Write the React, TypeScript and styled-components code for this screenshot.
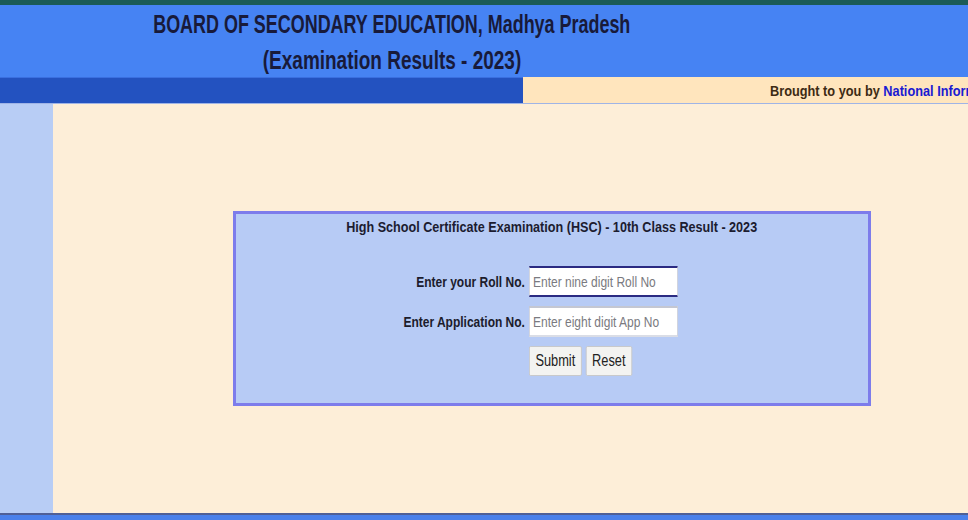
import React from 'react'
import styled, { createGlobalStyle } from 'styled-components'

const GlobalStyle = createGlobalStyle`
  html, body {
    margin: 0;
    padding: 0;
    height: 100%;
    overflow: hidden;
  }
  body {
    font-family: "Liberation Sans", Arial, sans-serif;
  }
`

// the original page uses a narrow face; squeeze Liberation Sans to match
const Narrow = styled.span<{ $origin?: string; $k?: number }>`
  display: inline-block;
  white-space: nowrap;
  transform: scaleX(${(p) => p.$k ?? 0.8});
  transform-origin: ${(p) => p.$origin ?? 'center'};
`

const Page = styled.div`
  width: 968px;
  height: 520px;
  display: flex;
  flex-direction: column;
  background: #fdeed8;
`

const TopStrip = styled.div`
  height: 5px;
  background: #1b5b56;
`

const Header = styled.header`
  height: 72px;
  background: #4683f3;
  display: grid;
  grid-template-columns: 784px 1fr;
`

const Title = styled.h1`
  margin: 0;
  padding-top: 1px;
  display: flex;
  flex-direction: column;
  align-items: center;
  font-size: 26px;
  line-height: 36px;
  font-weight: 700;
  color: #181a3a;
`

const SubBar = styled.div`
  height: 26px;
  display: grid;
  grid-template-columns: 523px 1fr;
  border-bottom: 1px solid #9fb4e6;
`

const SubBarLeft = styled.div`
  background: #2352c0;
  border-top: 1px solid #3a6fe0;
`

const SubBarRight = styled.div`
  background: #ffe5bd;
  overflow: hidden;
  padding-left: 247px;
  padding-top: 1px;
  font-size: 15px;
  line-height: 26px;
  font-weight: 700;
  color: #3d2b14;
`

const Link = styled.span`
  color: #1a1ad2;
`

const Body = styled.main`
  flex: 1;
  display: grid;
  grid-template-columns: 53px 1fr;
`

const SideColumn = styled.aside`
  background: #b8cdf5;
`

const Content = styled.section`
  background: #fdeed8;
  padding: 107px 0 0 180px;
`

const FormBox = styled.div`
  width: 632px;
  height: 189px;
  background: #b7cbf5;
  border: 3px solid #7d7ceb;
  display: flex;
  flex-direction: column;
`

const BoxTitle = styled.div`
  padding-top: 3px;
  text-align: center;
  font-size: 15px;
  line-height: 20px;
  font-weight: 700;
  color: #1c1c30;
`

const FormGrid = styled.div`
  margin-top: 29px;
  display: grid;
  grid-template-columns: 289px auto;
  column-gap: 4px;
  row-gap: 9px;
  align-items: center;
`

const Label = styled.label`
  text-align: right;
  font-size: 15px;
  font-weight: 700;
  color: #1c1c2c;
`

const Input = styled.input<{ $focused?: boolean }>`
  width: 186px;
  height: 31px;
  box-sizing: border-box;
  padding: 0 4px;
  background: #fff;
  font-family: inherit;
  font-size: 15px;
  color: #222;
  border: 1px solid #c9ccd6;
  border-top: 2px solid ${(p) => (p.$focused ? '#2b2b82' : '#c4c7d2')};
  border-bottom: 2px solid ${(p) => (p.$focused ? '#2b2b82' : '#dadde6')};
  outline: none;
  transform: scaleX(0.8);
  transform-origin: left;
  &::placeholder {
    color: #7a7a80;
  }
`

const Buttons = styled.div`
  grid-column: 2;
  display: flex;
  gap: 5px;
  transform: scaleX(0.8);
  transform-origin: left;
`

const Button = styled.button`
  height: 30px;
  padding: 0 7px;
  background: #f3f3f1;
  border: 1px solid #c6c6c6;
  border-radius: 2px;
  font-family: inherit;
  font-size: 16px;
  color: #222;
`

const Footer = styled.footer`
  height: 7px;
  background: #4a80ea;
  border-top: 2px solid #4f5f96;
  box-sizing: border-box;
`

export default function App() {
  return (
    <>
      <GlobalStyle />
      <Page>
        <TopStrip />
        <Header>
          <Title>
            <Narrow $k={0.69}>BOARD OF SECONDARY EDUCATION, Madhya Pradesh</Narrow>
            <Narrow $k={0.73}>(Examination Results - 2023)</Narrow>
          </Title>
          <div />
        </Header>
        <SubBar>
          <SubBarLeft />
          <SubBarRight>
            <Narrow $origin="left" $k={0.85}>
              Brought to you by <Link>National Informatics Centre</Link>
            </Narrow>
          </SubBarRight>
        </SubBar>
        <Body>
          <SideColumn />
          <Content>
            <FormBox>
              <BoxTitle>
                <Narrow $k={0.84}>
                  High School Certificate Examination (HSC) - 10th Class Result - 2023
                </Narrow>
              </BoxTitle>
              <FormGrid>
                <Label htmlFor="roll">
                  <Narrow $origin="right">Enter your Roll No.</Narrow>
                </Label>
                <Input id="roll" $focused placeholder="Enter nine digit Roll No" />
                <Label htmlFor="app">
                  <Narrow $origin="right">Enter Application No.</Narrow>
                </Label>
                <Input id="app" placeholder="Enter eight digit App No" />
                <Buttons>
                  <Button>Submit</Button>
                  <Button>Reset</Button>
                </Buttons>
              </FormGrid>
            </FormBox>
          </Content>
        </Body>
        <Footer />
      </Page>
    </>
  )
}
